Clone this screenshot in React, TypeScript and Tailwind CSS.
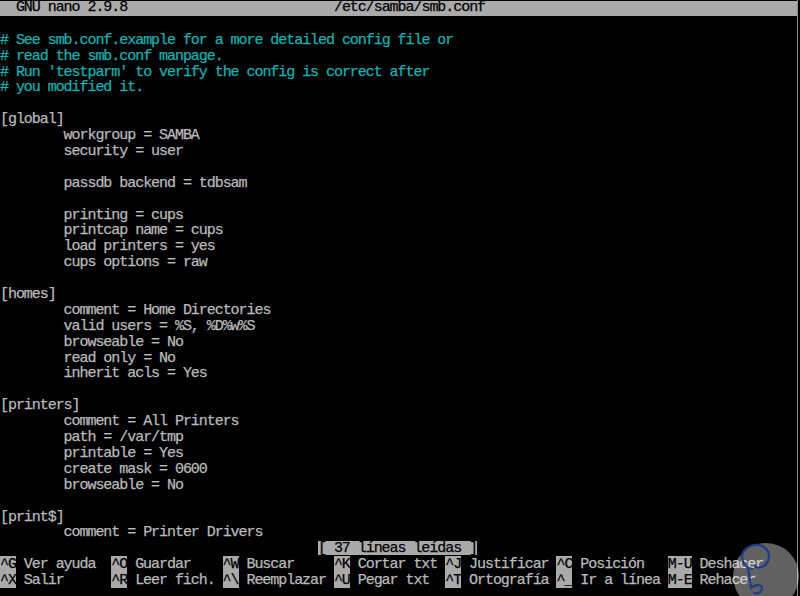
import React from 'react';

type Line = { text: string; comment?: boolean };

const T = '        ';

const lines: Line[] = [
  { text: '' },
  { text: '# See smb.conf.example for a more detailed config file or', comment: true },
  { text: '# read the smb.conf manpage.', comment: true },
  { text: "# Run 'testparm' to verify the config is correct after", comment: true },
  { text: '# you modified it.', comment: true },
  { text: '' },
  { text: '[global]' },
  { text: T + 'workgroup = SAMBA' },
  { text: T + 'security = user' },
  { text: '' },
  { text: T + 'passdb backend = tdbsam' },
  { text: '' },
  { text: T + 'printing = cups' },
  { text: T + 'printcap name = cups' },
  { text: T + 'load printers = yes' },
  { text: T + 'cups options = raw' },
  { text: '' },
  { text: '[homes]' },
  { text: T + 'comment = Home Directories' },
  { text: T + 'valid users = %S, %D%w%S' },
  { text: T + 'browseable = No' },
  { text: T + 'read only = No' },
  { text: T + 'inherit acls = Yes' },
  { text: '' },
  { text: '[printers]' },
  { text: T + 'comment = All Printers' },
  { text: T + 'path = /var/tmp' },
  { text: T + 'printable = Yes' },
  { text: T + 'create mask = 0600' },
  { text: T + 'browseable = No' },
  { text: '' },
  { text: '[print$]' },
  { text: T + 'comment = Printer Drivers' },
];

const shortcuts: [string, string][][] = [
  [
    ['^G', 'Ver ayuda'],
    ['^O', 'Guardar'],
    ['^W', 'Buscar'],
    ['^K', 'Cortar txt'],
    ['^J', 'Justificar'],
    ['^C', 'Posición'],
    ['M-U', 'Deshacer'],
  ],
  [
    ['^X', 'Salir'],
    ['^R', 'Leer fich.'],
    ['^\\', 'Reemplazar'],
    ['^U', 'Pegar txt'],
    ['^T', 'Ortografía'],
    ['^_', 'Ir a línea'],
    ['M-E', 'Rehacer'],
  ],
];

// one terminal row; text sits a little low in its cell like the VGA font
const row = 'h-[15.9px] pt-[2px] leading-[13.9px] whitespace-pre';
const box = 'inline-block h-[15.9px] -mt-[2px] pt-[2px] align-top bg-[#aaaaaa] text-black';

export default function App() {
  return (
    <div className="relative w-[800px] h-[596px] bg-black overflow-hidden flex font-['Liberation_Mono',monospace] text-[15px] tracking-[-1.05px] [-webkit-text-stroke:0.25px]">
      <div className="w-[797px] pt-[1px] flex flex-col">
        {/* title bar */}
        <div className="h-[14.5px] leading-[14.5px] whitespace-pre bg-[#aaaaaa] text-black">
          {'  GNU nano 2.9.8                          /etc/samba/smb.conf'}
        </div>
        <div className="h-[0.4px]" />

        {lines.map((l, i) => (
          <div key={i} className={`${row} ${l.comment ? 'text-[#1ab0b0]' : 'text-[#bababa]'}`}>
            {l.text}
          </div>
        ))}

        {/* status line */}
        <div className="h-[15.9px] flex items-start pt-[1px]">
          <div className="w-[318px] shrink-0" />
          <div className="h-[14px] leading-[15px] whitespace-pre bg-[#aaaaaa] text-black">
            [ 37 líneas leídas ]
          </div>
        </div>

        {shortcuts.map((r, i) => (
          <div key={i} className={`${row} flex`}>
            {r.map(([key, label]) => (
              <div key={key} className="w-[111.3px] shrink-0 whitespace-pre">
                <span className={box}>{key}</span>
                <span className="text-[#bababa]">{' ' + label}</span>
              </div>
            ))}
          </div>
        ))}
      </div>
      <div className="w-px bg-[#8c8c8c]" />
      <div className="w-[2px]" />

      {/* watermark */}
      <svg
        className="absolute left-[730px] top-[536px] pointer-events-none"
        width="70"
        height="60"
        viewBox="730 536 70 60"
      >
        <circle cx="766" cy="576" r="33" fill="#ffffff" fillOpacity="0.38" />
        <path
          d="M752 569 C740 566 738 551 751 546 C763 542 772 551 768 561 C765 568 757 569 755 566"
          fill="none"
          stroke="#1d3c8c"
          strokeWidth="2.2"
          strokeLinecap="round"
        />
        <path
          d="M748 569 C750 576 750 582 751 588 C755 584 763 584 762 589 C761 593 757 594 754 593"
          fill="none"
          stroke="#1d3c8c"
          strokeWidth="2.2"
          strokeLinecap="round"
        />
      </svg>
    </div>
  );
}
